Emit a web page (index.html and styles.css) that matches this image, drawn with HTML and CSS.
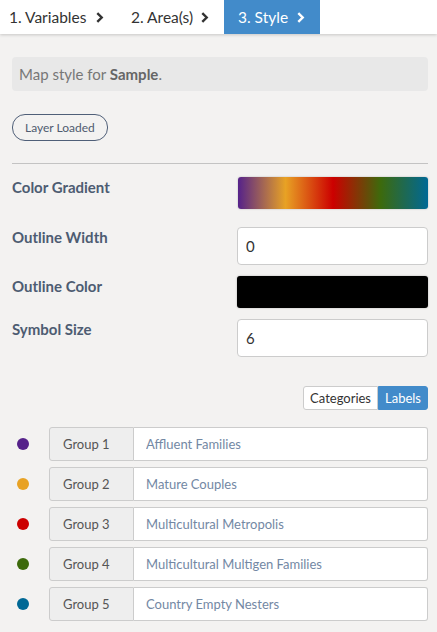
FILE: index.html
```html
<!DOCTYPE html>
<html lang="en">
<head>
    <meta charset="UTF-8">
    <meta name="viewport" content="width=device-width, initial-scale=1.0">
    <title>Map Style</title>
    <link rel="stylesheet" href="styles.css">
</head>
<body>

    <div class="steps">
        <div class="step step-1">1. Variables
            <svg class="chev" viewBox="0 0 8 10"><polyline points="2,1 6,5 2,9"/></svg>
        </div>
        <div class="step step-2">2. Area(s)
            <svg class="chev" viewBox="0 0 8 10"><polyline points="2,1 6,5 2,9"/></svg>
        </div>
        <div class="step step-3 active">3. Style
            <svg class="chev" viewBox="0 0 8 10"><polyline points="2,1 6,5 2,9"/></svg>
        </div>
    </div>

    <div class="panel">
        <div class="info">Map style for <b>Sample</b>.</div>

        <span class="pill">Layer Loaded</span>

        <hr class="divider">

        <div class="field gradient-field">
            <label>Color Gradient</label>
            <div class="gradient"></div>
        </div>
        <div class="field">
            <label for="outlineWidth">Outline Width</label>
            <input type="text" id="outlineWidth" value="0">
        </div>
        <div class="field">
            <label>Outline Color</label>
            <div class="swatch"></div>
        </div>
        <div class="field">
            <label for="symbolSize">Symbol Size</label>
            <input type="text" id="symbolSize" value="6">
        </div>

        <div class="toggle-row">
            <div class="toggle">
                <button>Categories</button>
                <button class="on">Labels</button>
            </div>
        </div>

        <div class="groups">
            <div class="group-row">
                <span class="dot" style="background:#55228a"></span>
                <div class="input-group">
                    <span class="addon">Group 1</span>
                    <input type="text" value="Affluent Families">
                </div>
            </div>
            <div class="group-row">
                <span class="dot" style="background:#e8a224"></span>
                <div class="input-group">
                    <span class="addon">Group 2</span>
                    <input type="text" value="Mature Couples">
                </div>
            </div>
            <div class="group-row">
                <span class="dot" style="background:#cc0000"></span>
                <div class="input-group">
                    <span class="addon">Group 3</span>
                    <input type="text" value="Multicultural Metropolis">
                </div>
            </div>
            <div class="group-row">
                <span class="dot" style="background:#3d6a0c"></span>
                <div class="input-group">
                    <span class="addon">Group 4</span>
                    <input type="text" value="Multicultural Multigen Families">
                </div>
            </div>
            <div class="group-row">
                <span class="dot" style="background:#006895"></span>
                <div class="input-group">
                    <span class="addon">Group 5</span>
                    <input type="text" value="Country Empty Nesters">
                </div>
            </div>
        </div>
    </div>

</body>
</html>
```

FILE: styles.css
```css
* {
    box-sizing: border-box;
}

body {
    margin: 0;
    font-family: "Source Sans Pro", Lato, "Liberation Sans", sans-serif;
    background-color: #f3f2f1;
    color: #333;
}

.steps {
    display: flex;
    height: 34px;
    background-color: white;
    box-shadow: 0 1px 3px rgba(0, 0, 0, 0.18);
}

.step {
    display: flex;
    align-items: center;
    justify-content: space-between;
    padding: 0 15px 0 14px;
    font-size: 15.5px;
    color: #333;
}

.step-1 {
    width: 117px;
    padding-left: 9px;
    padding-right: 13px;
}

.step-2 {
    width: 107px;
}

.step-3 {
    width: 96px;
}

.step.active {
    background-color: #428bca;
    color: white;
}

.chev {
    width: 9px;
    height: 11px;
    fill: none;
    stroke: currentColor;
    stroke-width: 2.2;
}

.panel {
    padding: 23px 9px 12px 12px;
}

.info {
    background-color: #e8e8e8;
    border-radius: 4px;
    padding: 8px 7px;
    font-size: 15px;
    color: #777;
}

.info b {
    color: #666;
}

.pill {
    display: inline-block;
    margin-top: 23px;
    padding: 5px 12px;
    border: 1px solid #4f5f78;
    border-radius: 13px;
    font-size: 12px;
    color: #4f5b6f;
}

.divider {
    border: none;
    border-top: 1px solid #c3c3c3;
    margin: 22px 0 13px;
}

.field {
    display: flex;
    align-items: flex-start;
    margin-bottom: 11px;
}

.gradient-field {
    margin-bottom: 18px;
}

.field label {
    flex: none;
    width: 225px;
    padding-top: 1px;
    font-size: 15px;
    font-weight: bold;
    color: #4d5c72;
}

.gradient {
    flex: 1;
    height: 32px;
    border-radius: 3px;
    background: linear-gradient(to right, #55228a 0%, #e8a224 25%, #cc0000 50%, #3d6a0c 75%, #006895 100%);
    box-shadow: 0 0 2px rgba(0, 0, 0, 0.25);
    margin-left: 1px;
}

.field input {
    flex: 1;
    width: 0;
    height: 38px;
    padding: 0 8px;
    border: 1px solid #ccc;
    border-radius: 4px;
    font-family: inherit;
    font-size: 15px;
    color: #333;
    background-color: white;
}

.swatch {
    flex: 1;
    height: 32px;
    border-radius: 3px;
    background-color: black;
    box-shadow: 0 0 2px rgba(0, 0, 0, 0.3);
}

.toggle-row {
    display: flex;
    justify-content: flex-end;
    margin-top: 29px;
}

.toggle {
    display: flex;
}

.toggle button {
    height: 24px;
    padding: 0 6px;
    border: 1px solid #ccc;
    background-color: white;
    font-family: inherit;
    font-size: 13px;
    color: #333;
    border-radius: 3px 0 0 3px;
}

.toggle button.on {
    background-color: #428bca;
    border-color: #428bca;
    color: white;
    border-radius: 0 3px 3px 0;
}

.groups {
    margin-top: 17px;
}

.group-row {
    display: flex;
    align-items: center;
    margin-bottom: 6px;
}

.dot {
    width: 12px;
    height: 12px;
    border-radius: 50%;
    margin: 0 20px 0 5px;
}

.input-group {
    flex: 1;
    display: flex;
    height: 34px;
}

.addon {
    width: 85px;
    display: flex;
    align-items: center;
    padding-left: 13px;
    background-color: #eeeeee;
    border: 1px solid #ccc;
    border-radius: 3px 0 0 3px;
    font-size: 13px;
    color: #555;
}

.input-group input {
    flex: 1;
    width: 0;
    padding: 0 12px;
    border: 1px solid #ccc;
    border-left: none;
    border-radius: 0 3px 3px 0;
    font-family: inherit;
    font-size: 13px;
    color: #7388a4;
    background-color: white;
}
```
